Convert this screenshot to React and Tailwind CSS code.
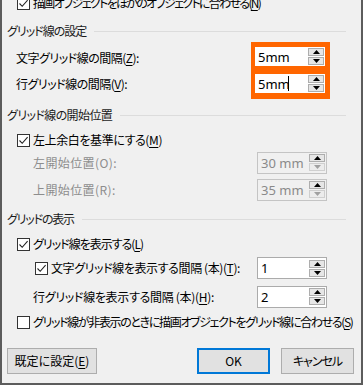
import React from 'react';

const jp = "font-['Yu_Gothic_UI','Noto_Sans_CJK_JP',sans-serif] [font-feature-settings:'palt'] text-[12px] leading-[16px]";
const num = "font-['Noto_Sans','Noto_Sans_CJK_JP',sans-serif] text-[13px] leading-[16px]";

const Arrow = ({ up, color = '#000' }) => (
  <svg width="7" height="4" viewBox="0 0 7 4" className="block">
    {up ? <path d="M0 4 L3.5 0 L7 4 Z" fill={color} /> : <path d="M0 0 L3.5 4 L7 0 Z" fill={color} />}
  </svg>
);

const Check = ({ checked }) => (
  <span className="flex h-[13px] w-[13px] shrink-0 items-center justify-center border border-[#333] bg-white">
    {checked && (
      <svg width="11" height="11" viewBox="0 0 11 11">
        <path d="M1.5 5.5 L4.2 8.3 L9.6 2.2" fill="none" stroke="#222" strokeWidth="1.1" />
      </svg>
    )}
  </span>
);

const Spin = ({ value, h = 'h-[22px]', disabled, bare }) => (
  <div
    className={`flex w-[70px] ${h} items-center ${bare ? '' : 'border'} ${
      disabled ? 'border-[#c4c4c4] bg-[#f0f0f0] text-[#8a8a8a]' : 'border-[#ababab] bg-white text-black'
    }`}
  >
    <span className={`flex-1 pl-[3px] ${num}`}>{value}</span>
    <div className="mr-[1px] flex flex-col gap-[1px]">
      <span className="flex h-[8px] w-[16px] items-center justify-center border border-[#adadad] bg-[#e6e6e6]">
        <Arrow up />
      </span>
      <span className={`flex h-[8px] w-[16px] items-center justify-center border ${disabled ? 'border-[#cfcfcf] bg-[#ececec]' : 'border-[#adadad] bg-[#e6e6e6]'}`}>
        <Arrow color={disabled ? '#a0a0a0' : '#000'} />
      </span>
    </div>
  </div>
);

const Header = ({ children, h, track }) => (
  <div className={`flex ${h} items-center pl-[5px] pr-[15px]`}>
    <span className={`${jp} ${track} text-[#1b1b1b]`}>{children}</span>
    <span className="ml-[8px] h-px flex-1 bg-[#dcdcdc]" />
  </div>
);

const U = ({ children }) => <span className="underline underline-offset-2">{children}</span>;

export default function App() {
  return (
    <div className="h-[385px] w-[363px] overflow-hidden border-b-2 border-l-2 border-r-2 border-[#5c5c5c] bg-[#f0f0f0] text-black">
      <div className="mt-[-8px] flex h-[22px] items-center gap-[3px] pl-[15px]">
        <Check checked />
        <span className={`${jp} tracking-[-1.7px]`}>描画オブジェクトをほかのオブジェクトに合わせる(<U>N</U>)</span>
      </div>

      <div className="flex h-[28px] items-center pt-[6px] pl-[5px] pr-[15px]">
        <span className={`${jp} tracking-[-1px] text-[#1b1b1b]`}>グリッド線の設定</span>
        <span className="ml-[8px] h-px flex-1 bg-[#dcdcdc]" />
      </div>

      <div className="flex h-[57px]">
        <div className="flex flex-1 flex-col pt-[3px] pl-[14px]">
          <div className={`flex h-[26px] items-center ${jp} tracking-[-0.5px]`}>文字グリッド線の間隔(<U>Z</U>):</div>
          <div className={`flex h-[26px] items-center ${jp} tracking-[-0.5px]`}>行グリッド線の間隔(<U>V</U>):</div>
        </div>
        <div className="mr-[31px] flex w-[79px] flex-col gap-[8px] bg-[#ff6600] pt-[5px] pr-[5px] pl-[4px]">
          <Spin value="5mm" h="h-[19px]" bare />
          <div className="relative">
            <Spin value="5mm" h="h-[19px]" bare />
            <span className="absolute top-[2px] left-[33px] h-[15px] w-px bg-black" />
          </div>
        </div>
      </div>

      <Header h="h-[32px]" track="tracking-[-0.6px]">グリッド線の開始位置</Header>

      <div className="flex h-[18px] items-center gap-[3px] pl-[15px]">
        <Check checked />
        <span className={`${jp} tracking-[-0.4px]`}>左上余白を基準にする(<U>M</U>)</span>
      </div>
      <div className="flex h-[27px] items-center pl-[31px] pr-[34px]">
        <span className={`flex-1 ${jp} tracking-[0.4px] text-[#8d8d8d]`}>左開始位置(O):</span>
        <Spin value="30 mm" disabled />
      </div>
      <div className="flex h-[27px] items-center pl-[31px] pr-[34px]">
        <span className={`flex-1 ${jp} tracking-[0.4px] text-[#8d8d8d]`}>上開始位置(R):</span>
        <Spin value="35 mm" disabled />
      </div>

      <Header h="h-[32px]" track="tracking-[-1.2px]">グリッドの表示</Header>

      <div className="flex h-[18px] items-center gap-[3px] pl-[15px]">
        <Check checked />
        <span className={`${jp} tracking-[-1px]`}>グリッド線を表示する(<U>L</U>)</span>
      </div>
      <div className="flex h-[30px] items-center pl-[33px] pr-[34px]">
        <div className="flex flex-1 items-center gap-[3px]">
          <Check checked />
          <span className={`${jp} tracking-[-0.4px]`}>文字グリッド線を表示する間隔 (本)(<U>T</U>):</span>
        </div>
        <Spin value="1" />
      </div>
      <div className="flex h-[27px] items-center pl-[31px] pr-[34px]">
        <span className={`flex-1 ${jp} tracking-[-0.3px]`}>行グリッド線を表示する間隔 (本)(<U>H</U>):</span>
        <Spin value="2" />
      </div>
      <div className="flex h-[24px] items-center gap-[3px] pl-[15px]">
        <Check />
        <span className={`${jp} tracking-[-1.35px] whitespace-nowrap`}>グリッド線が非表示のときに描画オブジェクトをグリッド線に合わせる(<U>S</U>)</span>
      </div>

      <div className="mt-[14px] flex h-[26px] pl-[5px]">
        <button className={`h-[26px] w-[90px] border border-[#adadad] bg-[#e1e1e1] ${jp}`}>既定に設定(<U>E</U>)</button>
        <button className={`ml-[100px] h-[26px] w-[73px] border-2 border-[#0078d7] bg-[#e1e1e1] ${jp}`}>OK</button>
        <button className={`ml-[11px] h-[26px] w-[73px] border border-[#adadad] bg-[#e1e1e1] ${jp} tracking-[-1px]`}>キャンセル</button>
      </div>
    </div>
  );
}
